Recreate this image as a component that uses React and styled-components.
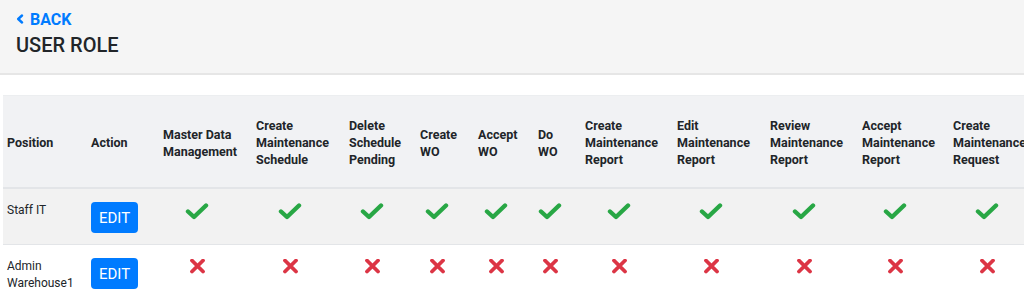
import React from 'react';
import styled, { createGlobalStyle } from 'styled-components';

const GlobalStyle = createGlobalStyle`
  html, body {
    margin: 0;
    padding: 0;
    overflow: hidden;
    background: #fff;
  }
  body {
    font-family: Roboto, "Segoe UI", "Liberation Sans", sans-serif;
    color: #212529;
  }
`;

const TopBar = styled.header`
  height: 75px;
  box-sizing: border-box;
  padding: 10px 16px 0;
  background: #f5f5f5;
  border-bottom: 2px solid #e6e6e6;
`;

const BackLink = styled.a`
  display: flex;
  align-items: center;
  gap: 6px;
  height: 18px;
  color: #007bff;
  font-weight: 700;
  font-size: 16px;
  text-decoration: none;
  cursor: pointer;
`;

const Title = styled.h1`
  margin: 5px 0 0;
  font-size: 20px;
  font-weight: 500;
  line-height: 24px;
  color: #212529;
`;

const TableWrap = styled.div`
  padding: 20px 0 0 3px;
`;

const Table = styled.table`
  border-collapse: collapse;
  table-layout: fixed;
  width: 1039px;
  font-size: 12px;
`;

const HeadCell = styled.th`
  width: ${(p) => p.$w}px;
  box-sizing: border-box;
  background: #f1f2f4;
  padding: 21px 4px 19px;
  text-align: left;
  vertical-align: middle;
  font-size: 12.5px;
  font-weight: 700;
  line-height: 17px;
  border-top: 1px solid #eceef0;
  border-bottom: 2px solid #e3e5e8;
`;

const Row = styled.tr`
  background: ${(p) => (p.$striped ? '#f2f2f2' : '#fff')};
  border-bottom: 1px solid #e3e5e8;
`;

const Cell = styled.td`
  padding: 13px 4px 11px;
  vertical-align: top;
  line-height: 17px;
  height: 31px;
`;

const IconCell = styled.td`
  padding: 14px 21px 11px 4px;
  vertical-align: top;
  text-align: center;
`;

const EditButton = styled.button`
  width: 47px;
  height: 31px;
  border: none;
  border-radius: 4px;
  background: #007bff;
  color: #fff;
  font-family: inherit;
  font-size: 15px;
  padding: 0;
  cursor: pointer;
`;

const columns = [
  { w: 84, label: ['Position'] },
  { w: 72, label: ['Action'] },
  { w: 93, label: ['Master Data', 'Management'] },
  { w: 93, label: ['Create', 'Maintenance', 'Schedule'] },
  { w: 71, label: ['Delete', 'Schedule', 'Pending'] },
  { w: 58, label: ['Create', 'WO'] },
  { w: 60, label: ['Accept', 'WO'] },
  { w: 47, label: ['Do', 'WO'] },
  { w: 92, label: ['Create', 'Maintenance', 'Report'] },
  { w: 93, label: ['Edit', 'Maintenance', 'Report'] },
  { w: 92, label: ['Review', 'Maintenance', 'Report'] },
  { w: 91, label: ['Accept', 'Maintenance', 'Report'] },
  { w: 93, label: ['Create', 'Maintenance', 'Request'] },
];

const roles = [
  { name: ['Staff IT'], perms: Array(11).fill(true) },
  { name: ['Admin', 'Warehouse1'], perms: Array(11).fill(false) },
];

const Check = () => (
  <svg width="24" height="17" viewBox="0 0 24 17">
    <polyline points="3,8.5 9,14 21,2.5" fill="none" stroke="#28a745" strokeWidth="4.4" strokeLinecap="round" strokeLinejoin="round" />
  </svg>
);

const Cross = () => (
  <svg width="24" height="15" viewBox="0 0 24 15">
    <path d="M7 1.5 L18 12.5 M18 1.5 L7 12.5" stroke="#dc3545" strokeWidth="3.8" strokeLinecap="round" />
  </svg>
);

const Chevron = () => (
  <svg width="8" height="10" viewBox="0 0 8 10">
    <polyline points="6,1.5 2.2,5 6,8.5" fill="none" stroke="#007bff" strokeWidth="2.4" strokeLinecap="round" strokeLinejoin="round" />
  </svg>
);

const Lines = ({ lines }) => lines.map((l, i) => (
  <React.Fragment key={i}>
    {i > 0 && <br />}
    {l}
  </React.Fragment>
));

export default function App() {
  return (
    <>
      <GlobalStyle />
      <TopBar>
        <BackLink>
          <Chevron />
          BACK
        </BackLink>
        <Title>USER ROLE</Title>
      </TopBar>
      <TableWrap>
        <Table>
          <thead>
            <tr>
              {columns.map((c, i) => (
                <HeadCell key={i} $w={c.w}>
                  <Lines lines={c.label} />
                </HeadCell>
              ))}
            </tr>
          </thead>
          <tbody>
            {roles.map((r, i) => (
              <Row key={i} $striped={i % 2 === 0}>
                <Cell>
                  <Lines lines={r.name} />
                </Cell>
                <Cell>
                  <EditButton>EDIT</EditButton>
                </Cell>
                {r.perms.map((ok, j) => (
                  <IconCell key={j}>{ok ? <Check /> : <Cross />}</IconCell>
                ))}
              </Row>
            ))}
          </tbody>
        </Table>
      </TableWrap>
    </>
  );
}
